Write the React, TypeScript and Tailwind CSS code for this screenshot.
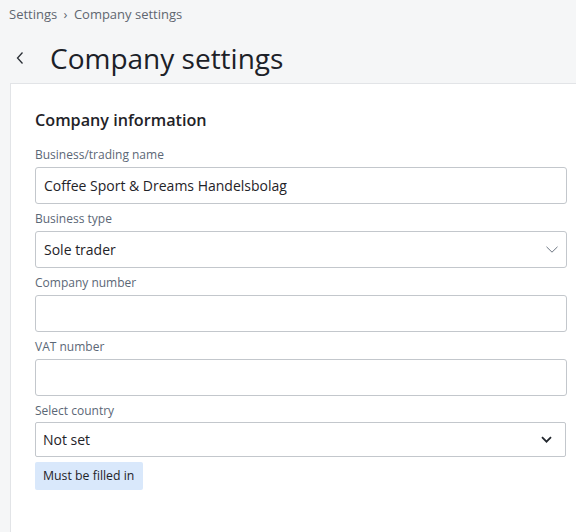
import React from "react";

const labelCls = "block h-[18px] text-[12px] leading-[18px] text-[#5b6776]";
const inputCls =
  "mt-[3px] flex h-[37px] w-full items-center rounded-[3px] border border-[#c3c7cc] bg-white px-[8px] text-[14px] text-[#1f2328]";

function Field({ label, value }: { label: string; value?: string }) {
  return (
    <div>
      <div className={labelCls}>{label}</div>
      <div className={inputCls}>{value}</div>
    </div>
  );
}

export default function App() {
  return (
    <div
      className="h-[532px] w-[576px] overflow-hidden bg-[#f5f6f7]"
      style={{ fontFamily: '"Open Sans", "Noto Sans", sans-serif' }}
    >
      <div className="px-[9px] pt-[5px] text-[13px] leading-[18px] text-[#5f6670]">
        Settings <span className="mx-[3px]">›</span> Company settings
      </div>
      <div className="mt-[12px] flex h-[46px] items-center">
        <svg className="ml-[15px] h-[14px] w-[10px]" viewBox="0 0 10 14" fill="none">
          <path d="M7.5 1.5 L2.5 7 L7.5 12.5" stroke="#2a2f36" strokeWidth="1.3" />
        </svg>
        <h1 className="ml-[25px] text-[28px] font-normal leading-[40px] text-[#1c2128]">
          Company settings
        </h1>
      </div>
      <div className="ml-[10px] mt-[2px] h-[500px] w-[600px] border-l border-t border-[#e2e4e7] bg-white pl-[24px] pt-[24px]">
        <div className="w-[532px]">
          <h2 className="text-[16.2px] font-semibold leading-[24px] text-[#1f2328]">
            Company information
          </h2>
          <div className="mt-[14px] flex flex-col gap-[6px]">
            <Field label="Business/trading name" value="Coffee Sport & Dreams Handelsbolag" />
            <div>
              <div className={labelCls}>Business type</div>
              <div className={inputCls + " justify-between"}>
                <span>Sole trader</span>
                <svg className="h-[7px] w-[12px]" viewBox="0 0 12 7" fill="none">
                  <path d="M0.5 0.8 L6 6.2 L11.5 0.8" stroke="#6b7480" strokeWidth="1" />
                </svg>
              </div>
            </div>
            <Field label="Company number" />
            <Field label="VAT number" />
            <div>
              <div className={labelCls}>Select country</div>
              <div className="mt-[2px] flex h-[35px] w-[531px] items-center justify-between rounded-[2px] border border-[#c3c7cc] bg-white px-[7px] text-[14px] text-[#1f2328]">
                <span>Not set</span>
                <svg className="mr-[6px] h-[7px] w-[11px]" viewBox="0 0 11 7" fill="none">
                  <path d="M1 1.2 L5.5 5.7 L10 1.2" stroke="#22272e" strokeWidth="1.8" />
                </svg>
              </div>
              <div className="mt-[5px] inline-flex h-[28px] items-center rounded-[2px] bg-[#d9e8fb] pl-[8px] pr-[9px] text-[12.3px] text-[#1f2328]">
                Must be filled in
              </div>
            </div>
          </div>
        </div>
      </div>
    </div>
  );
}
